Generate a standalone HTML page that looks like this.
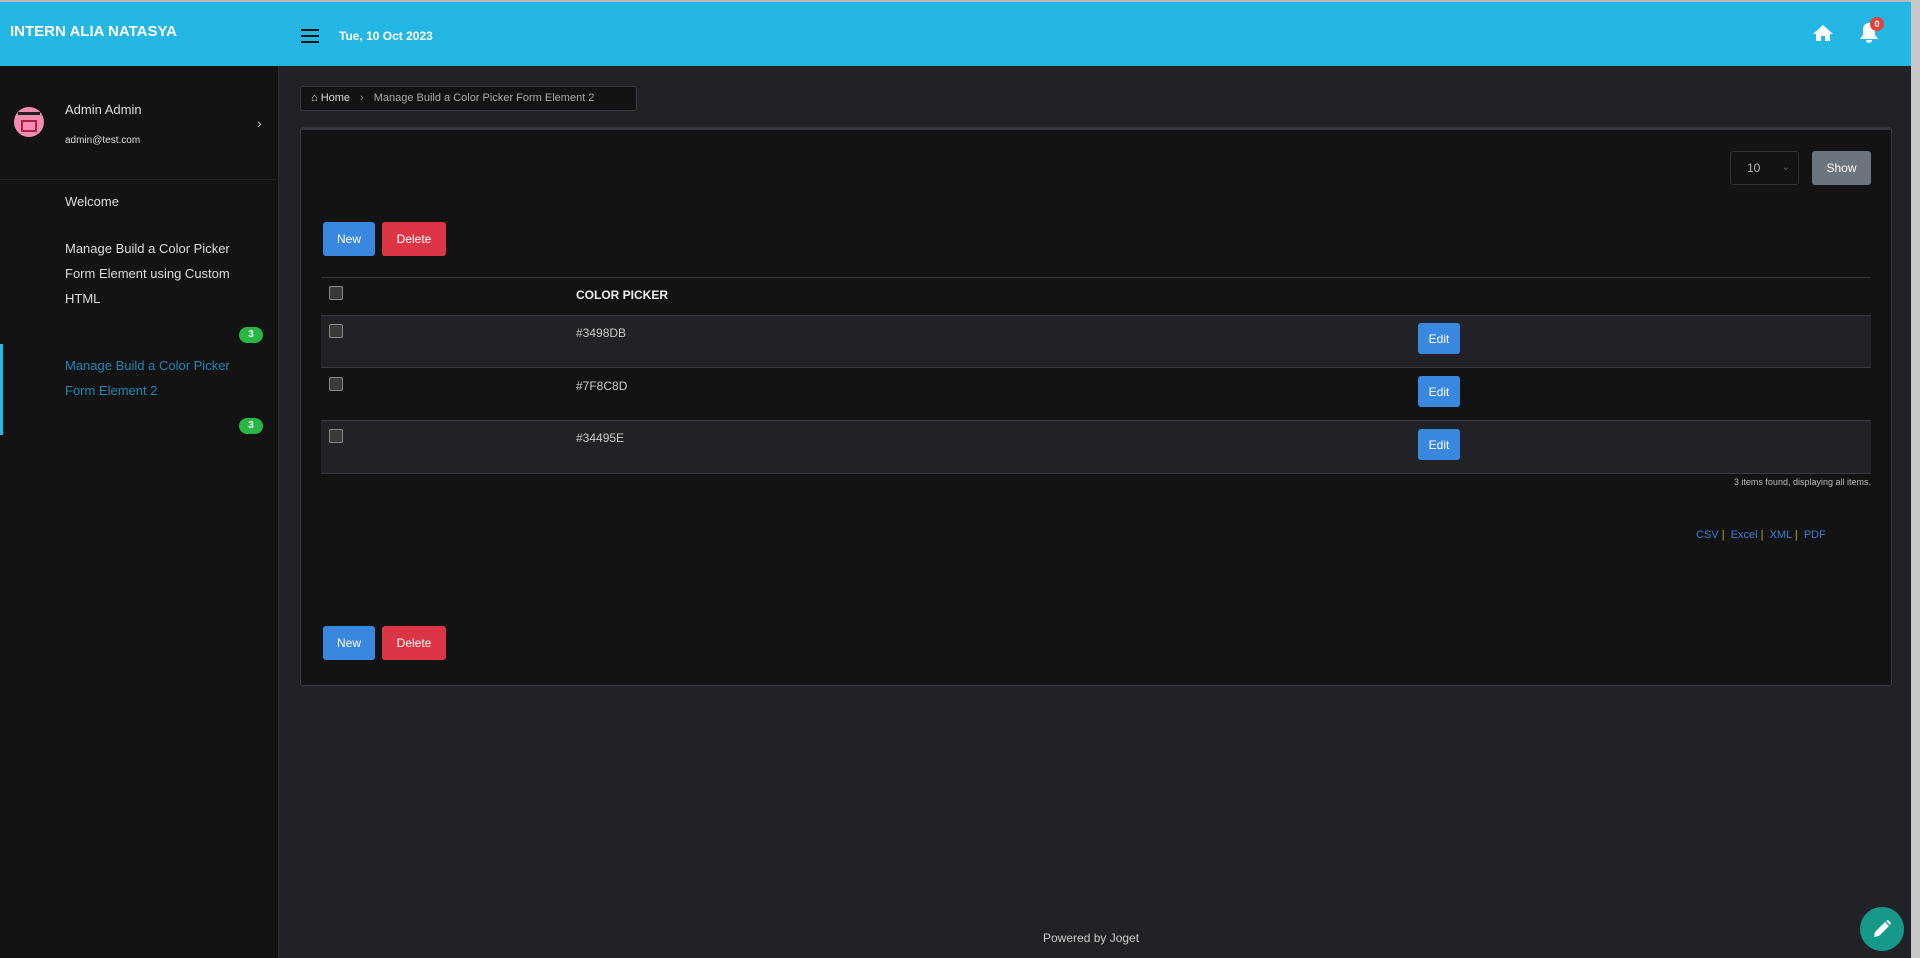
<!DOCTYPE html>
<html><head><meta charset="utf-8"><style>
*{box-sizing:border-box;margin:0;padding:0}
body{width:1920px;height:958px;overflow:hidden;background:#212226;font-family:"Liberation Sans",sans-serif;color:#ddd;position:relative}
.abs{position:absolute}
.top{left:0;top:0;width:1911px;height:66px;background:#24b7e4;border-top:2px solid #bbb}
.sb{left:0;top:66px;width:279px;height:892px;background:#131313;border-right:1px solid #2a2b2f}
.scroll{left:1911px;top:0;width:9px;height:958px;background:#c8c8c8}
.btn{position:absolute;color:#fff;font-size:12px;border-radius:3px;display:flex;align-items:center;justify-content:center}
.blue{background:#3a87e0}.red{background:#dc3545}
.cb{position:absolute;width:14px;height:14px;border:1px solid #888;background:#3a3a3a;border-radius:2px;left:329px}
.row{position:absolute;left:321px;width:1550px}
.t{position:absolute;left:576px;font-size:12px;color:#ccc}
.badge{position:absolute;left:239px;width:24px;height:16px;border-radius:8px;background:#28b745;color:#fff;font-size:10px;font-weight:bold;text-align:center;line-height:16px}
.mi{position:absolute;left:65px;font-size:13px;color:#ddd;line-height:25px}
</style></head><body>
<div class="abs top"></div>
<div class="abs" style="left:10px;top:23px;font-size:15px;font-weight:bold;color:#fff">INTERN ALIA NATASYA</div>
<div class="abs" style="left:301px;top:29px;width:18px"><div style="height:2px;background:#111;margin-bottom:4px"></div><div style="height:2px;background:#111;margin-bottom:4px"></div><div style="height:2px;background:#111"></div></div>
<div class="abs" style="left:339px;top:29px;font-size:12px;font-weight:bold;color:#fff">Tue, 10 Oct 2023</div>
<svg class="abs" style="left:1813px;top:24px" width="20" height="18" viewBox="0 0 20 18"><path d="M10 1L0 10h3v7h5v-5h4v5h5v-7h3z" fill="#fff"/></svg>
<svg class="abs" style="left:1859px;top:22px" width="20" height="22" viewBox="0 0 20 22"><path d="M10 1c-4 0-6 3-6 7v5l-3 4h18l-3-4V8c0-4-2-7-6-7zM7 18a3 3 0 0 0 6 0z" fill="#fff"/></svg>
<div class="abs" style="left:1870px;top:17px;width:14px;height:14px;border-radius:7px;background:#e8413c;color:#fff;font-size:9px;font-weight:bold;text-align:center;line-height:14px">0</div>
<div class="abs scroll"></div>
<div class="abs sb"></div>
<div class="abs" style="left:14px;top:107px;width:30px;height:30px;border-radius:15px;background:#f28cb0"><div style="margin:5px 4px;height:3px;background:#222"></div><div style="margin:3px 7px;height:12px;border:2px solid #a24;"></div></div>
<div class="abs" style="left:65px;top:102px;font-size:13px">Admin Admin</div>
<div class="abs" style="left:65px;top:135px;font-size:10px">admin@test.com</div>
<div class="abs" style="left:257px;top:115px;font-size:14px;color:#ccc">›</div>
<div class="abs" style="left:0;top:179px;width:279px;height:1px;background:#222"></div>
<div class="mi" style="top:189px">Welcome</div>
<div class="mi" style="top:236px">Manage Build a Color Picker<br>Form Element using Custom<br>HTML</div>
<div class="badge" style="top:327px">3</div>
<div class="abs" style="left:0;top:344px;width:3px;height:91px;background:#24b7e4"></div>
<div class="mi" style="top:353px;color:#1f86b5">Manage Build a Color Picker<br>Form Element 2</div>
<div class="badge" style="top:418px">3</div>
<div class="abs" style="left:300px;top:86px;width:337px;height:25px;border:1px solid #3a3b3f;border-radius:3px;background:#131313;font-size:11px;line-height:23px;padding-left:10px"><span style="color:#ddd">&#8962; Home</span><span style="color:#888;margin:0 10px">›</span><span style="color:#aaa">Manage Build a Color Picker Form Element 2</span></div>
<div class="abs" style="left:300px;top:127px;width:1592px;height:559px;background:#131313;border:1px solid #3a3b3f;border-top:3px solid #35363a;border-radius:3px"></div>
<div class="abs" style="left:1730px;top:151px;width:69px;height:34px;border:1px solid #333;border-radius:3px;font-size:12px;color:#bbb;line-height:32px;padding-left:16px">10<span style="position:absolute;right:8px;color:#666;font-size:10px">⌄</span></div>
<div class="btn" style="left:1812px;top:151px;width:59px;height:34px;background:#6c757d">Show</div>
<div class="btn blue" style="left:323px;top:222px;width:52px;height:34px">New</div>
<div class="btn red" style="left:382px;top:222px;width:64px;height:34px">Delete</div>
<div class="row" style="top:277px;height:38px;border-top:1px solid #3a3b3f"></div>
<div class="cb" style="top:286px"></div>
<div class="t" style="top:288px;font-weight:bold;color:#eee">COLOR PICKER</div>
<div class="row" style="top:315px;height:52px;background:#212226;border-top:1px solid #3a3b3f"></div>
<div class="row" style="top:367px;height:53px;border-top:1px solid #3a3b3f"></div>
<div class="row" style="top:420px;height:54px;background:#212226;border-top:1px solid #3a3b3f;border-bottom:1px solid #3a3b3f"></div>
<div class="cb" style="top:324px"></div><div class="t" style="top:326px">#3498DB</div><div class="btn blue" style="left:1418px;top:323px;width:42px;height:31px">Edit</div>
<div class="cb" style="top:377px"></div><div class="t" style="top:379px">#7F8C8D</div><div class="btn blue" style="left:1418px;top:376px;width:42px;height:31px">Edit</div>
<div class="cb" style="top:429px"></div><div class="t" style="top:431px">#34495E</div><div class="btn blue" style="left:1418px;top:429px;width:42px;height:31px">Edit</div>
<div class="abs" style="right:49px;top:477px;font-size:9px;color:#bbb">3 items found, displaying all items.</div>
<div class="abs" style="left:1696px;top:529px;font-size:11px;color:#3a7bd5">CSV <span style="color:#c9a227">|</span>&nbsp; Excel <span style="color:#c9a227">|</span>&nbsp; XML <span style="color:#c9a227">|</span>&nbsp; PDF</div>
<div class="btn blue" style="left:323px;top:626px;width:52px;height:34px">New</div>
<div class="btn red" style="left:382px;top:626px;width:64px;height:34px">Delete</div>
<div class="abs" style="left:1043px;top:931px;font-size:12px;color:#ccc">Powered by Joget</div>
<div class="abs" style="left:1860px;top:907px;width:44px;height:44px;border-radius:22px;background:#17998a"></div>
<svg class="abs" style="left:1872px;top:919px" width="20" height="20" viewBox="0 0 20 20"><path d="M2 18l1-5L13 3l4 4L7 17zM14 2l2-1 3 3-1 2z" fill="#fff"/></svg>
</body></html>
